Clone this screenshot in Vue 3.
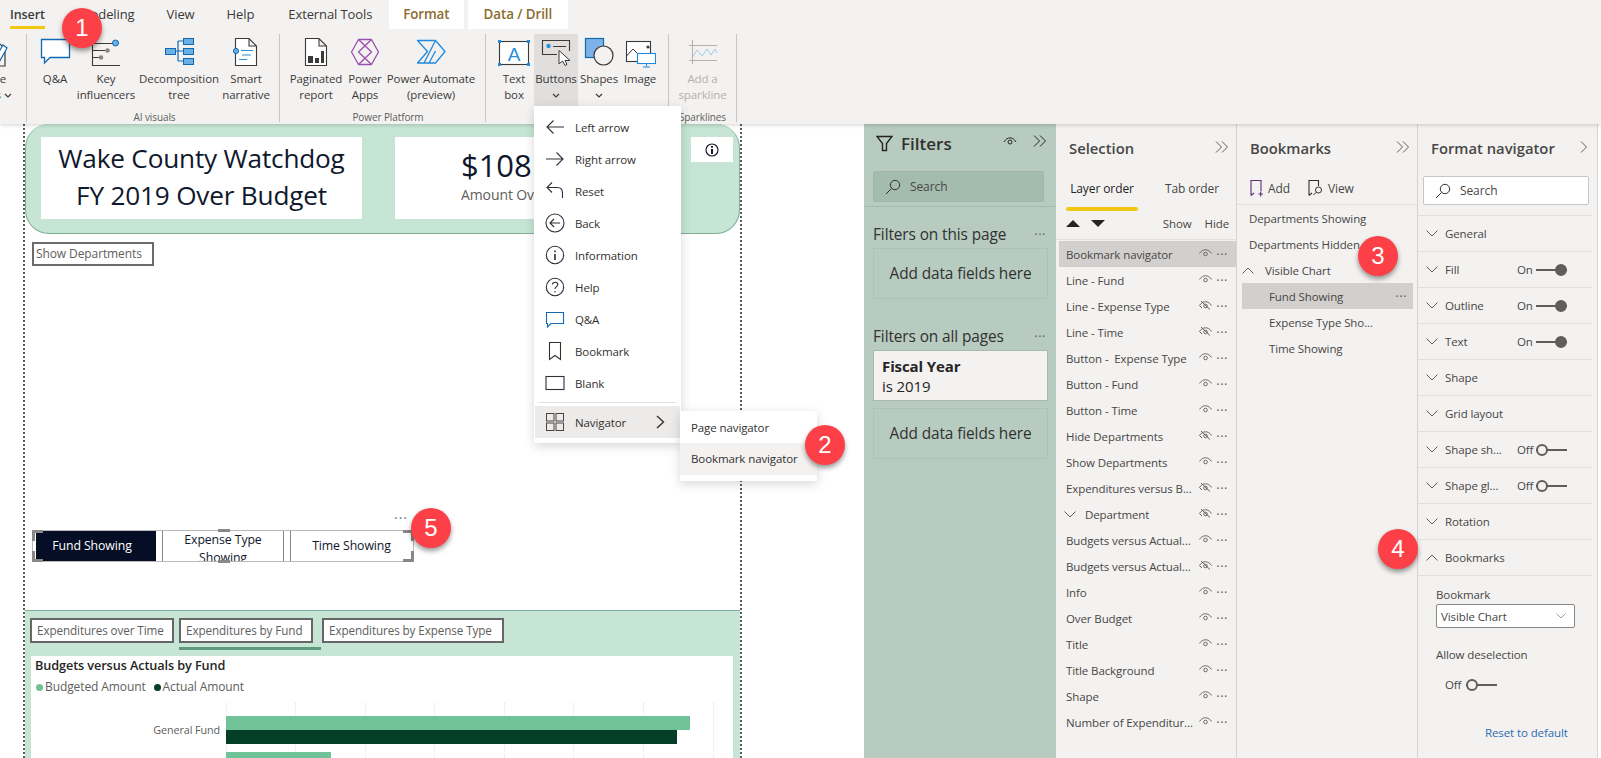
<script setup>
const BLUE = '#1168b3';
const DARK = '#3b3a39';

// ribbon icons, all drawn on a 32x32 box
const ribbonIcons = {
  pencil: `<path d="M-8 8H7L12 13V30H-8" fill="none" stroke="${DARK}" stroke-width="1.2"/><path d="M0 26L10 9l4 3L5 28Z" fill="#fff" stroke="${BLUE}" stroke-width="1.2"/>`,
  qa: `<path d="M2.5 3.5H30.5V21.5H11L5.5 27V21.5H2.5Z" fill="#fff" stroke="${BLUE}" stroke-width="1.3"/>`,
  key: `<g fill="none" stroke="${DARK}" stroke-width="1.1"><path d="M2.5 7V29.5H30M2.5 7.5H23M2.5 14.5H15M2.5 21.5H9"/></g><circle cx="25.5" cy="7" r="3" fill="#6ab0e4" stroke="${BLUE}"/><circle cx="17.5" cy="14.5" r="2.3" fill="#8a8886"/><circle cx="11" cy="21.5" r="2.3" fill="#8a8886"/>`,
  decomp: `<path d="M13 15H20M15 5V25M15 5H20M15 25H20" fill="none" stroke="${BLUE}" stroke-width="1.2"/><g fill="#6ab0e4" stroke="${BLUE}"><rect x="2.5" y="12.5" width="10" height="6"/><rect x="20.5" y="2.5" width="10" height="6"/><rect x="20.5" y="12.5" width="10" height="6"/><rect x="20.5" y="22.5" width="10" height="6"/></g>`,
  smart: `<path d="M5.5 2.5H19L26.5 10V29.5H5.5ZM19 2.5V10H26.5" fill="#fff" stroke="${DARK}" stroke-width="1.1"/><circle cx="6" cy="15" r="2.6" fill="#6ab0e4" stroke="${BLUE}"/><path d="M11 14.5H23M12 19H21M9 23.5H17" stroke="#2a8fd8" stroke-width="1.1"/>`,
  paginated: `<path d="M5.5 2.5H19L26.5 10V29.5H5.5ZM19 2.5V10H26.5" fill="#fff" stroke="${DARK}" stroke-width="1.1"/><g fill="${DARK}"><rect x="8" y="20" width="5" height="7"/><rect x="15" y="22" width="4" height="5"/><rect x="21" y="15" width="3" height="12"/></g>`,
  apps: `<g fill="none" stroke="#9b4fb0" stroke-width="1.3" stroke-linejoin="round"><path d="M9.5 3.5H22.5L29.5 16L22.5 28.5H9.5L2.5 16Z"/><path d="M9.5 3.5L22.5 16L9.5 28.5M22.5 3.5L9.5 16L22.5 28.5"/></g>`,
  automate: `<g fill="none" stroke="#1f8ae0" stroke-width="1.3" stroke-linejoin="round"><path d="M2.5 4.5H20.5L30 15.5L20.5 27H2.5L12.5 15.5Z"/><path d="M20.5 4.5L9 27M20.5 15L14 27"/></g>`,
  textbox: `<rect x="1.5" y="5.5" width="29" height="23" fill="#fff" stroke="${DARK}" stroke-width="1.1"/><text x="16" y="24.5" font-size="19" text-anchor="middle" fill="#2a8fd8" font-family="Liberation Sans">A</text><g fill="#1f8ae0"><rect y="4" width="3" height="3"/><rect x="29" y="4" width="3" height="3"/><rect y="27" width="3" height="3"/><rect x="29" y="27" width="3" height="3"/></g>`,
  button: `<path d="M17 18.5H2.5V4.5H29.5V15" fill="none" stroke="${DARK}" stroke-width="1.1"/><circle cx="8.5" cy="10" r="2.2" fill="#2a8fd8"/><path d="M13 10.5H26" stroke="${DARK}"/><path d="M19 14.5V28L22.5 25L25 29.5L27 28.5L25 24.5H30Z" fill="#fff" stroke="${DARK}"/>`,
  shapes: `<rect x="2.5" y="2.5" width="18" height="19" fill="#7cb3ea" stroke="${BLUE}" stroke-width="1.2"/><circle cx="20.5" cy="19.5" r="9.5" fill="#f3f2f1" stroke="${DARK}" stroke-width="1.2"/>`,
  image: `<rect x="2.5" y="5.5" width="24" height="20" fill="#fff" stroke="${DARK}" stroke-width="1.1"/><path d="M2.5 20L9 13L15 19" fill="none" stroke="${DARK}"/><circle cx="24" cy="11" r="1.6" fill="${DARK}"/><rect x="13.5" y="17.5" width="18" height="10" fill="#fff" stroke="#1f8ae0" stroke-width="1.1"/><path d="M22.5 27.5V30.5M19 31H26" stroke="#1f8ae0"/>`,
  sparkline: `<path d="M5.5 4V28M2 9.5H30M2 24.5H30" stroke="#b3b0ad" fill="none"/><path d="M5.5 21L10 14L15 20L20 13L24 19L28 13L30 17" fill="none" stroke="#9ccde8"/>`,
};

const ribbonGroups = [
  {
    width: 27, left: 0, caption: '',
    items: [{ width: 26, icon: 'pencil', lines: ['re', 's'], chevron: true, cut: true }],
  },
  {
    width: 253, left: 3, caption: 'AI visuals',
    items: [
      { width: 50, icon: 'qa', lines: ['Q&A'] },
      { width: 52, icon: 'key', lines: ['Key', 'influencers'] },
      { width: 94, icon: 'decomp', lines: ['Decomposition', 'tree'] },
      { width: 40, icon: 'smart', lines: ['Smart', 'narrative'] },
    ],
  },
  {
    width: 206, left: 11, caption: 'Power Platform',
    items: [
      { width: 50, icon: 'paginated', lines: ['Paginated', 'report'] },
      { width: 48, icon: 'apps', lines: ['Power', 'Apps'] },
      { width: 84, icon: 'automate', lines: ['Power Automate', '(preview)'] },
    ],
  },
  {
    width: 183, left: 8, caption: '',
    items: [
      { width: 40, icon: 'textbox', lines: ['Text', 'box'] },
      { width: 44, icon: 'button', lines: ['Buttons'], chevron: true, active: true },
      { width: 42, icon: 'shapes', lines: ['Shapes'], chevron: true },
      { width: 40, icon: 'image', lines: ['Image'] },
    ],
  },
  {
    width: 68, left: 0, caption: 'Sparklines',
    items: [{ width: 67, icon: 'sparkline', lines: ['Add a', 'sparkline'], disabled: true }],
  },
];

const ribbonTabs = [
  { label: 'Insert', cls: 'tab--active' },
  { label: 'Modeling', cls: '' },
  { label: 'View', cls: '' },
  { label: 'Help', cls: '' },
  { label: 'External Tools', cls: '' },
  { label: 'Format', cls: 'tab--context' },
  { label: 'Data / Drill', cls: 'tab--context' },
];

// insert menu icons, 20x20 box
const menuItems = [
  { label: 'Left arrow', icon: '<path d="M19 10H2M8.5 3.5L2 10L8.5 16.5"/>' },
  { label: 'Right arrow', icon: '<path d="M1 10H18M11.5 3.5L18 10L11.5 16.5"/>' },
  { label: 'Reset', icon: '<path d="M2 6.5H12.5C16 6.5 17.5 9 17.5 12V17M7 1.5L2 6.5L7 11.5"/>' },
  { label: 'Back', icon: '<circle cx="10" cy="10" r="9"/><path d="M15 10H5M9 6L5 10L9 14"/>' },
  { label: 'Information', icon: '<circle cx="10" cy="10" r="8.7"/><path d="M10 9V15M10 5.5V7.2" stroke-width="1.6"/>' },
  { label: 'Help', icon: '<circle cx="10" cy="10" r="8.7"/><path d="M7.5 7.5C7.5 4.5 12.8 4.5 12.8 7.5C12.8 9.7 10 9.5 10 12M10 14V15.5"/>' },
  { label: 'Q&A', icon: `<path d="M1.5 3.5H18.5V14.5H6L2.5 18V14.5H1.5Z" stroke="${BLUE}"/>` },
  { label: 'Bookmark', icon: '<path d="M4.5 1.5H15.5V18.5L10 14.5L4.5 18.5Z"/>' },
  { label: 'Blank', icon: '<rect x="1" y="3.5" width="18" height="13"/>' },
];

const layers = [
  { name: 'Bookmark navigator', selected: true },
  { name: 'Line - Fund' },
  { name: 'Line - Expense Type', hidden: true },
  { name: 'Line - Time', hidden: true },
  { name: 'Button -  Expense Type' },
  { name: 'Button - Fund' },
  { name: 'Button - Time' },
  { name: 'Hide Departments', hidden: true },
  { name: 'Show Departments' },
  { name: 'Expenditures versus B...', hidden: true },
  { name: 'Department', hidden: true, group: true },
  { name: 'Budgets versus Actual...' },
  { name: 'Budgets versus Actual...', hidden: true },
  { name: 'Info' },
  { name: 'Over Budget' },
  { name: 'Title' },
  { name: 'Title Background' },
  { name: 'Shape' },
  { name: 'Number of Expenditur...' },
];

const formatRows = [
  { label: 'General' },
  { label: 'Fill', toggle: 'On' },
  { label: 'Outline', toggle: 'On' },
  { label: 'Text', toggle: 'On' },
  { label: 'Shape' },
  { label: 'Grid layout' },
  { label: 'Shape sh...', toggle: 'Off' },
  { label: 'Shape gl...', toggle: 'Off' },
  { label: 'Rotation' },
  { label: 'Bookmarks', open: true },
];

const gridLines = [226, 295, 365, 434, 504, 573, 643, 713];
</script>

<template>
  <div class="app">
    <header class="ribbon">
      <nav class="tabs">
        <span v-for="tab in ribbonTabs" :key="tab.label" class="tab" :class="tab.cls">{{ tab.label }}</span>
      </nav>
      <div class="groups">
        <section
          v-for="(group, i) in ribbonGroups"
          :key="i"
          class="group"
          :style="{ width: `${group.width}px`, paddingLeft: `${group.left}px` }"
        >
          <div class="group__items">
            <div
              v-for="item in group.items"
              :key="item.icon"
              class="rb"
              :class="{ 'rb--active': item.active, 'rb--off': item.disabled, 'rb--cut': item.cut }"
              :style="{ width: `${item.width}px` }"
            >
              <svg class="rb__icon" width="32" height="32" viewBox="0 0 32 32" v-html="ribbonIcons[item.icon]"></svg>
              <span v-for="line in item.lines" :key="line" class="rb__line">{{ line }}<svg v-if="item.cut && line === 's'" class="rb__inline" width="8" height="6" viewBox="0 0 8 6"><path d="M1 1L4 4L7 1" fill="none" stroke="#3b3a39" stroke-width="1.2" /></svg></span>
              <svg v-if="item.chevron && !item.cut" class="rb__more" width="8" height="6" viewBox="0 0 8 6"><path d="M1 1L4 4L7 1" fill="none" stroke="#3b3a39" stroke-width="1.2" /></svg>
            </div>
          </div>
          <div class="group__caption">{{ group.caption }}</div>
        </section>
      </div>
    </header>

    <main class="workspace">
      <div class="canvas">
        <div class="page">
          <div class="title-band">
            <div class="title-card">Wake County Watchdog<br />FY 2019 Over Budget</div>
            <div class="kpi-card">
              <div class="kpi-card__value">$108M</div>
              <div class="kpi-card__label">Amount Over Budget</div>
            </div>
            <div class="info-card">
              <svg width="14" height="14" viewBox="0 0 14 14"><circle cx="7" cy="7" r="6" fill="none" stroke="#1a1a2a" stroke-width="1.2" /><path d="M7 6V11M7 3V4.7" stroke="#1a1a2a" stroke-width="2" /></svg>
            </div>
          </div>

          <div class="show-dept">Show Departments</div>

          <div class="navigator">
            <span class="navigator__more">···</span>
            <div class="nav-btn nav-btn--on">Fund Showing</div>
            <div class="nav-btn nav-btn--two">Expense Type Showing</div>
            <div class="nav-btn">Time Showing</div>
            <i class="corner corner--tl"></i>
            <i class="corner corner--tr"></i>
            <i class="corner corner--bl"></i>
            <i class="corner corner--br"></i>
            <i class="notch notch--top"></i>
            <i class="notch notch--bottom"></i>
          </div>

          <div class="chart-band">
            <div class="chart-tabs">
              <span class="chart-tab chart-tab--time">Expenditures over Time</span>
              <span class="chart-tab chart-tab--fund">Expenditures by Fund</span>
              <span class="chart-tab">Expenditures by Expense Type</span>
            </div>
            <div class="chart">
              <div class="chart__title">Budgets versus Actuals by Fund</div>
              <div class="legend">
                <i class="legend__dot legend__dot--budget"></i>Budgeted Amount
                <i class="legend__dot legend__dot--actual"></i>Actual Amount
              </div>
              <i v-for="x in gridLines" :key="x" class="grid-line" :style="{ left: `${x - 31}px` }"></i>
              <div class="bars">
                <span class="bars__label">General Fund</span>
                <div class="bars__track">
                  <div class="bar bar--budget" style="width: 464px"></div>
                  <div class="bar bar--actual" style="width: 451px"></div>
                  <div class="bar bar--budget bar--gap" style="width: 105px"></div>
                </div>
              </div>
            </div>
          </div>
        </div>
      </div>

      <aside class="filters">
        <div class="filters__head">
          <svg width="17" height="17" viewBox="0 0 17 17"><path d="M1 1.5H16L10.5 8.5V15.5H6.5V8.5Z" fill="none" stroke="#252423" stroke-width="1.4" /></svg>
          <h2 class="filters__title">Filters</h2>
          <svg class="filters__eye" width="14" height="10" viewBox="0 0 14 10"><path d="M1 6C4 0.5 10 0.5 13 6" fill="none" stroke="#252423" /><circle cx="7" cy="6" r="2" fill="none" stroke="#252423" /></svg>
          <svg class="filters__collapse" width="14" height="12" viewBox="0 0 14 12"><path d="M1 0.5L6.5 6L1 11.5M7 0.5L12.5 6L7 11.5" fill="none" stroke="#252423" /></svg>
        </div>
        <div class="filters__search">
          <svg width="16" height="16" viewBox="0 0 16 16"><circle cx="10" cy="6" r="4.7" fill="none" stroke="#323130" /><path d="M6.5 9.5L1 15" stroke="#323130" /></svg>
          Search
        </div>
        <div class="filters__body">
          <div class="filters__section"><span>Filters on this page</span><b class="dots">···</b></div>
          <div class="drop-well">Add data fields here</div>
          <div class="filters__section filters__section--all"><span>Filters on all pages</span><b class="dots">···</b></div>
          <div class="filter-card"><strong>Fiscal Year</strong><br />is 2019</div>
          <div class="drop-well drop-well--second">Add data fields here</div>
        </div>
      </aside>

      <aside class="panel selection">
        <div class="panel__head">
          <h2 class="panel__title">Selection</h2>
          <svg class="panel__collapse" width="14" height="12" viewBox="0 0 14 12"><path d="M1 0.5L6.5 6L1 11.5M7 0.5L12.5 6L7 11.5" fill="none" stroke="#605e5c" /></svg>
        </div>
        <div class="sel-tabs">
          <span class="sel-tab sel-tab--on">Layer order</span>
          <span class="sel-tab">Tab order</span>
        </div>
        <div class="sel-tools">
          <i class="tri tri--up"></i>
          <i class="tri tri--down"></i>
          <span class="sel-tools__show">Show</span>
          <span>Hide</span>
        </div>
        <div class="layers">
          <div v-for="(layer, i) in layers" :key="i" class="layer" :class="{ 'layer--selected': layer.selected }">
            <svg v-if="layer.group" class="layer__chev" width="12" height="7" viewBox="0 0 12 7"><path d="M0.5 0.5L6 6L11.5 0.5" fill="none" stroke="#605e5c" /></svg>
            <span class="layer__name" :class="{ 'layer__name--group': layer.group }">{{ layer.name }}</span>
            <svg class="layer__eye" width="13" height="10" viewBox="0 0 13 10">
              <path d="M0.5 5.5C3.5 0.5 9.5 0.5 12.5 5.5" fill="none" stroke="#605e5c" stroke-width="0.9" />
              <circle cx="6.5" cy="6" r="1.8" fill="none" stroke="#605e5c" stroke-width="0.9" />
              <path v-if="layer.hidden" d="M2 1L11 9.5M0.5 5.5L3 8" fill="none" stroke="#605e5c" stroke-width="1" />
            </svg>
            <b class="dots">···</b>
          </div>
        </div>
      </aside>

      <aside class="panel bookmarks">
        <div class="panel__head">
          <h2 class="panel__title">Bookmarks</h2>
          <svg class="panel__collapse" width="14" height="12" viewBox="0 0 14 12"><path d="M1 0.5L6.5 6L1 11.5M7 0.5L12.5 6L7 11.5" fill="none" stroke="#605e5c" /></svg>
        </div>
        <div class="bm-tools">
          <span class="bm-tool">
            <svg width="13" height="17" viewBox="0 0 13 17"><path d="M1 15.5V0.5H11V11M1 15.5L4 13M8.5 14H13M10.7 11.5V16.5" fill="none" stroke="#5c2d71" stroke-width="1.1" /></svg>
            Add
          </span>
          <span class="bm-tool bm-tool--view">
            <svg width="15" height="17" viewBox="0 0 15 17"><path d="M1 15.5V0.5H10.5V6M1 15.5L4 13" fill="none" stroke="#323130" stroke-width="1.1" /><circle cx="10.5" cy="10" r="3" fill="none" stroke="#323130" /><path d="M8.3 12.2L5.5 15" stroke="#323130" /></svg>
            View
          </span>
        </div>
        <div class="bm-list">
          <div class="bm">Departments Showing</div>
          <div class="bm">Departments Hidden</div>
          <div class="bm bm--group">
            <svg width="12" height="7" viewBox="0 0 12 7"><path d="M0.5 6.5L6 1L11.5 6.5" fill="none" stroke="#605e5c" /></svg>
            Visible Chart
          </div>
          <div class="bm bm--child bm--selected">Fund Showing<b class="dots">···</b></div>
          <div class="bm bm--child">Expense Type Sho...</div>
          <div class="bm bm--child">Time Showing</div>
        </div>
      </aside>

      <aside class="panel format">
        <div class="panel__head">
          <h2 class="panel__title">Format navigator</h2>
          <svg class="panel__collapse" width="8" height="12" viewBox="0 0 8 12"><path d="M1 0.5L6.5 6L1 11.5" fill="none" stroke="#605e5c" /></svg>
        </div>
        <div class="format__search">
          <svg width="16" height="16" viewBox="0 0 16 16"><circle cx="10" cy="6" r="4.7" fill="none" stroke="#323130" /><path d="M6.5 9.5L1 15" stroke="#323130" /></svg>
          Search
        </div>
        <div class="format__rows">
          <div v-for="row in formatRows" :key="row.label" class="f-row">
            <svg width="12" height="7" viewBox="0 0 12 7">
              <path :d="row.open ? 'M0.5 6.5L6 1L11.5 6.5' : 'M0.5 0.5L6 6L11.5 0.5'" fill="none" stroke="#605e5c" />
            </svg>
            <span class="f-row__label">{{ row.label }}</span>
            <template v-if="row.toggle">
              <span class="f-row__state">{{ row.toggle }}</span>
              <i class="toggle" :class="row.toggle === 'On' ? 'toggle--on' : 'toggle--off'"></i>
            </template>
          </div>
        </div>
        <div class="bookmark-opts">
          <div class="bookmark-opts__label">Bookmark</div>
          <div class="select">
            Visible Chart
            <svg width="10" height="6" viewBox="0 0 10 6"><path d="M0.5 0.5L5 5L9.5 0.5" fill="none" stroke="#a19f9d" /></svg>
          </div>
          <div class="bookmark-opts__allow">Allow deselection</div>
          <div class="bookmark-opts__off"><span>Off</span><i class="toggle toggle--off"></i></div>
          <div class="bookmark-opts__reset">Reset to default</div>
        </div>
      </aside>
    </main>

    <!-- dropdown from the Buttons ribbon item -->
    <div class="menu">
      <div v-for="item in menuItems" :key="item.label" class="menu__item">
        <svg class="menu__icon" width="20" height="20" viewBox="0 0 20 20" v-html="item.icon"></svg>
        {{ item.label }}
      </div>
      <div class="menu__sep"></div>
      <div class="menu__item menu__item--on">
        <svg class="menu__icon" width="20" height="20" viewBox="0 0 20 20"><g fill="none" stroke="#484644" stroke-width="1"><rect x="1.5" y="1.5" width="7.5" height="7.5" /><rect x="11" y="1.5" width="7.5" height="7.5" /><rect x="1.5" y="11" width="7.5" height="7.5" /><rect x="11" y="11" width="7.5" height="7.5" /></g></svg>
        Navigator
        <svg class="menu__arrow" width="9" height="14" viewBox="0 0 9 14"><path d="M1 1L7.5 7L1 13" fill="none" stroke="#323130" stroke-width="1.4" /></svg>
      </div>
    </div>
    <div class="submenu">
      <div class="submenu__item">Page navigator</div>
      <div class="submenu__item submenu__item--on">Bookmark navigator</div>
    </div>

    <span class="badge badge--1">1</span>
    <span class="badge badge--2">2</span>
    <span class="badge badge--3">3</span>
    <span class="badge badge--4">4</span>
    <span class="badge badge--5">5</span>
  </div>
</template>

<style>
html,
body {
  margin: 0;
  overflow: hidden;
  background: #fff;
}
</style>

<style scoped>
.app {
  position: relative;
  width: 1601px;
  height: 758px;
  overflow: hidden;
  font-family: 'Open Sans', 'Liberation Sans', sans-serif;
  font-size: 11.5px;
  color: #323130;
  letter-spacing: -0.1px;
}

/* ribbon */
.ribbon {
  position: relative;
  z-index: 2;
  height: 124px;
  background: #f3f2f1;
  box-shadow: 0 1px 4px rgba(0, 0, 0, 0.18);
}

.tabs {
  display: flex;
  height: 29px;
  font-size: 13px;
  color: #3b3a39;
}

.tab {
  position: relative;
  margin-left: 32px;
  line-height: 29px;
  white-space: nowrap;
}

.tab:first-child {
  width: 35px;
  margin-left: 10px;
  font-size: 12.5px;
}

.tab:nth-child(2) {
  margin-left: 34px;
}

.tab:nth-child(5) {
  margin-left: 34px;
}

.tab--active {
  font-weight: 600;
}

.tab--active::after {
  content: '';
  position: absolute;
  left: 0;
  right: 0;
  bottom: 0;
  height: 3px;
  background: #f2c811;
}

.tab--context {
  width: 100px;
  margin-left: 4px;
  background: #fff;
  color: #8a6d2f;
  font-size: 13.4px;
  font-weight: 600;
  text-align: center;
}

.tab--context:nth-child(6) {
  width: 75px;
  margin-left: 16.5px;
}

.groups {
  display: flex;
  padding-top: 5px;
  height: 90px;
}

.group {
  box-sizing: border-box;
  flex: none;
  height: 88px;
  border-right: 1px solid #c8c6c4;
}

.group__items {
  display: flex;
  height: 72px;
}

.group__caption {
  margin-top: 5px;
  line-height: 12px;
  font-size: 10px;
  text-align: center;
  color: #605e5c;
}

.rb {
  flex: none;
  display: flex;
  flex-direction: column;
  align-items: center;
  padding-top: 2px;
  box-sizing: border-box;
  line-height: 16px;
  white-space: nowrap;
  color: #3b3a39;
}

.rb--active {
  background: #e1dfdd;
}

.rb--off {
  color: #b3b0ad;
}

.rb--cut {
  align-items: flex-end;
  overflow: hidden;
  padding-right: 20px;
}

.rb--cut .rb__icon {
  margin-right: -19px;
}

.rb--cut .rb__line:last-child {
  margin-right: -6px;
}

.rb__icon {
  flex: none;
  margin-bottom: 3px;
}

.rb__inline {
  margin-left: 3px;
}

.rb__more {
  margin-top: 6px;
}

/* report canvas */
.workspace {
  display: flex;
  height: 634px;
}

.canvas {
  flex: none;
  width: 864px;
  background: #fff;
}

.page {
  box-sizing: border-box;
  display: flex;
  flex-direction: column;
  width: 719px;
  height: 634px;
  margin-left: 23px;
  border-left: 2px dotted #5c5c5c;
  border-right: 2px dotted #5c5c5c;
}

.title-band {
  box-sizing: border-box;
  flex: none;
  display: flex;
  align-items: flex-start;
  gap: 33px;
  height: 110px;
  padding: 13px 8px 0 15px;
  background: #c6e5d4;
  border: 1px solid #7fae96;
  border-top: none;
  border-radius: 24px;
}

.title-card {
  flex: none;
  width: 321px;
  height: 82px;
  background: #fff;
  color: #10182c;
  font-size: 26.2px;
  line-height: 37px;
  text-align: center;
  padding-top: 3px;
  box-sizing: border-box;
  letter-spacing: -0.2px;
}

.kpi-card {
  flex: none;
  width: 263px;
  height: 82px;
  background: #fff;
  padding: 8px 0 0 66px;
  box-sizing: border-box;
  color: #10182c;
  white-space: nowrap;
  overflow: hidden;
}

.kpi-card__value {
  font-size: 31px;
  line-height: 40px;
}

.kpi-card__label {
  font-size: 14px;
  line-height: 20px;
  color: #605e5c;
}

.info-card {
  flex: none;
  display: flex;
  align-items: center;
  justify-content: center;
  width: 42px;
  height: 25px;
  background: #fff;
}

.show-dept {
  flex: none;
  box-sizing: border-box;
  width: 122px;
  height: 24px;
  margin: 8px 0 0 7px;
  padding-left: 2px;
  border: 2px solid #6b6b6b;
  font-size: 12px;
  line-height: 20px;
  white-space: nowrap;
  color: #605e5c;
}

/* bookmark navigator in edit mode */
.navigator {
  position: relative;
  flex: none;
  display: flex;
  box-sizing: border-box;
  width: 382px;
  height: 32px;
  margin: 264px 0 0 7px;
  border: 1px solid #b9b9b9;
  gap: 6px;
  padding: 0 0 0 3px;
}

.nav-btn {
  flex: none;
  box-sizing: border-box;
  width: 122px;
  height: 30px;
  overflow: hidden;
  border-left: 1px solid #8a8886;
  text-align: center;
  line-height: 18px;
  padding: 6px 8px 0;
  font-size: 12.3px;
  white-space: nowrap;
  color: #10182c;
}

.nav-btn--on {
  width: 120px;
  padding: 6px 12px 0 4px;
  border-left: none;
  background: #050e24;
  color: #fff;
}

.nav-btn--two {
  padding: 0 20px;
  border-right: 1px solid #8a8886;
  white-space: normal;
}

.navigator__more {
  position: absolute;
  right: 5px;
  top: -23px;
  font-size: 14px;
  letter-spacing: 1px;
  color: #797775;
}

.corner {
  position: absolute;
  width: 8px;
  height: 8px;
  border: 0 solid #8a8886;
}

.corner--tl {
  left: -1px;
  top: -1px;
  border-width: 3px 0 0 3px;
}

.corner--tr {
  right: -1px;
  top: -1px;
  border-width: 3px 3px 0 0;
}

.corner--bl {
  left: -1px;
  bottom: -1px;
  border-width: 0 0 3px 3px;
}

.corner--br {
  right: -1px;
  bottom: -1px;
  border-width: 0 3px 3px 0;
}

.notch {
  position: absolute;
  left: 185px;
  width: 12px;
  height: 3px;
  background: #8a8886;
}

.notch--top {
  top: -2px;
}

.notch--bottom {
  bottom: -2px;
}

/* chart section */
.chart-band {
  flex: none;
  box-sizing: border-box;
  height: 148px;
  margin-top: 48px;
  background: #c6e5d4;
  border-top: 1px solid #7fae96;
}

.chart-tabs {
  display: flex;
  height: 45px;
  padding: 7px 0 0 5px;
  box-sizing: border-box;
}

.chart-tab {
  box-sizing: border-box;
  height: 25px;
  margin-right: 5px;
  padding: 0 5px;
  background: #fff;
  border: 2px solid #666;
  font-size: 11.7px;
  line-height: 21px;
  color: #605e5c;
  white-space: nowrap;
}

.chart-tab--time {
  width: 144px;
}

.chart-tab--fund {
  position: relative;
  width: 134px;
  margin-right: 9px;
}

.chart-tab--fund::after {
  content: '';
  position: absolute;
  left: -2px;
  bottom: -9px;
  width: 142px;
  height: 3px;
  background: #5e9a7c;
}

.chart-tab:nth-child(3) {
  width: 182px;
}

.chart {
  position: relative;
  box-sizing: border-box;
  width: 702px;
  height: 102px;
  margin-left: 6px;
  background: #fff;
  padding: 1px 0 0 4px;
  overflow: hidden;
}

.chart__title {
  font-size: 12.7px;
  line-height: 16px;
  font-weight: 600;
  color: #252423;
}

.legend {
  display: flex;
  align-items: center;
  margin-top: 6px;
  font-size: 12px;
  line-height: 16px;
  color: #605e5c;
  white-space: nowrap;
}

.legend__dot {
  width: 7px;
  height: 7px;
  margin-right: 2px;
  margin-left: 1px;
  border-radius: 50%;
}

.legend__dot--budget {
  background: #70c297;
}

.legend__dot--actual {
  margin-left: 8px;
  background: #053e26;
}

.grid-line {
  position: absolute;
  top: 47px;
  bottom: 0;
  width: 0;
  border-left: 1px dotted #e3e3e3;
}

.bars {
  position: relative;
  display: flex;
  margin-top: 21px;
  margin-left: -4px;
}

.bars__label {
  box-sizing: border-box;
  width: 195px;
  padding: 6px 6px 0 0;
  text-align: right;
  font-size: 10.8px;
  line-height: 16px;
  color: #605e5c;
}

.bars__track {
  flex: 1;
}

.bar {
  height: 14px;
}

.bar--budget {
  background: #70c297;
}

.bar--actual {
  background: #053e26;
}

.bar--gap {
  margin-top: 8px;
}

/* filters pane */
.filters {
  flex: none;
  box-sizing: border-box;
  width: 192px;
  background: #b7cbc0;
}

.filters__head {
  display: flex;
  align-items: center;
  height: 38px;
  padding: 0 0 0 12px;
  box-sizing: border-box;
}

.filters__title {
  margin: 0 0 0 8px;
  font-size: 17px;
  font-weight: 600;
  color: #323130;
  letter-spacing: 0;
}

.filters__eye {
  margin: -4px 0 0 51px;
}

.filters__collapse {
  margin: -4px 0 0 16px;
}

.filters__search {
  display: flex;
  align-items: center;
  gap: 9px;
  box-sizing: border-box;
  width: 171px;
  height: 31px;
  margin: 9px 0 0 9px;
  padding-left: 11px;
  background: #a4bcae;
  border: 1px solid #9fb6a9;
  border-radius: 2px;
  font-size: 12px;
  color: #484644;
}

.filters__body {
  margin-top: 4px;
  border-top: 1px solid #a7b8ae;
  padding: 0 8px 0 9px;
}

.filters__section {
  display: flex;
  align-items: center;
  justify-content: space-between;
  height: 18px;
  margin-top: 18px;
  font-size: 15.4px;
  white-space: nowrap;
  color: #323130;
  padding-right: 2px;
}

.filters__section--all {
  margin-top: 28px;
}

.drop-well {
  box-sizing: border-box;
  height: 51px;
  margin-top: 5px;
  border: 1px solid #adc2b6;
  font-size: 15.4px;
  line-height: 49px;
  text-align: center;
  white-space: nowrap;
  color: #323130;
}

.drop-well--second {
  margin-top: 7px;
}

.filter-card {
  box-sizing: border-box;
  height: 51px;
  margin-top: 5px;
  padding: 5px 0 0 8px;
  background: #f3f2f1;
  border: 1px solid #a7b8ae;
  font-size: 15px;
  line-height: 20px;
  color: #252423;
}

.dots {
  font-weight: 400;
  font-size: 13px;
  letter-spacing: 0.5px;
  color: #605e5c;
}

/* shared side panel */
.panel {
  flex: none;
  box-sizing: border-box;
  width: 181px;
  background: #f3f2f1;
  border-right: 1px solid #d6d4d2;
}

.panel__head {
  display: flex;
  align-items: center;
  justify-content: space-between;
  height: 48px;
  box-sizing: border-box;
  padding: 0 7px 0 13px;
}

.panel__title {
  margin: 0;
  font-size: 14.8px;
  font-weight: 600;
  color: #484644;
  letter-spacing: 0;
}

.panel__collapse {
  margin-top: -3px;
}

/* selection pane */
.sel-tabs {
  display: flex;
  height: 26px;
  padding-left: 10px;
  font-size: 12px;
  line-height: 34px;
}

.sel-tab {
  flex: none;
  width: 72px;
  margin-right: 18px;
  text-align: center;
  color: #484644;
  white-space: nowrap;
}

.sel-tab:last-child {
  margin-right: 0;
}

.sel-tab--on {
  position: relative;
  height: 39px;
  color: #252423;
}

.sel-tab--on::after {
  content: '';
  position: absolute;
  left: 0;
  right: 0;
  bottom: 0;
  height: 4px;
  border-radius: 2px;
  background: #f2c811;
}

.sel-tools {
  display: flex;
  align-items: center;
  height: 27px;
  margin-top: 15px;
  padding: 0 0 5px 10px;
  box-sizing: border-box;
  font-size: 11.5px;
  border-bottom: 1px solid #e1dfdd;
  margin-right: -1px;
  color: #484644;
}

.sel-tools span {
  margin-right: 13px;
  white-space: nowrap;
}

.sel-tools__show {
  margin-left: auto;
}

.sel-tools span:last-child {
  margin-right: 8px;
}

.tri {
  width: 0;
  height: 0;
  margin-right: 11px;
  border-left: 7px solid transparent;
  border-right: 7px solid transparent;
}

.tri--up {
  border-bottom: 7px solid #252423;
}

.tri--down {
  border-top: 7px solid #252423;
}

.layers {
  padding: 1px 0 0 3px;
}

.layer {
  display: flex;
  align-items: center;
  height: 26px;
  padding: 0 8px 0 7px;
  font-size: 11.5px;
  color: #484644;
}

.layer--selected {
  background: #d2d0ce;
}

.layer__name {
  flex: 1;
  min-width: 0;
  white-space: pre;
}

.layer__name--group {
  padding-left: 9px;
}

.layer__chev {
  flex: none;
  margin-left: -2px;
}

.layer__eye {
  flex: none;
  margin: -3px 4px 0 0;
}

/* bookmarks pane */
.bm-tools {
  display: flex;
  align-items: center;
  height: 32px;
  padding-left: 13px;
  border-bottom: 1px solid #e1dfdd;
  font-size: 12px;
}

.bm-tool {
  display: flex;
  align-items: center;
  gap: 5px;
  color: #484644;
}

.bm-tool--view {
  margin-left: 18px;
}

.bm-list {
  padding: 0 0 0 5px;
}

.bm {
  display: flex;
  align-items: center;
  height: 26px;
  padding: 0 0 0 7px;
  font-size: 11.5px;
  color: #484644;
  white-space: nowrap;
}

.bm--group svg {
  margin-right: 11px;
  margin-left: -7px;
}

.bm--child {
  padding-left: 27px;
}

.bm--selected {
  justify-content: space-between;
  padding-right: 6px;
  margin-right: 4px;
  background: #d2d0ce;
}

/* format pane */
.format {
  width: 180px;
  border-right: 1px solid #d6d4d2;
}

.format .panel__head {
  padding-left: 13px;
  padding-right: 9px;
}

.format__search {
  display: flex;
  align-items: center;
  gap: 9px;
  box-sizing: border-box;
  width: 166px;
  height: 29px;
  margin: 4px 0 0 5px;
  padding-left: 11px;
  background: #fff;
  border: 1px solid #c8c6c4;
  border-radius: 2px;
  font-size: 12px;
  color: #484644;
}

.format__rows {
  margin: 10px 5px 0 0;
  border-top: 1px solid #e1dfdd;
}

.f-row {
  display: flex;
  align-items: center;
  box-sizing: border-box;
  height: 36px;
  padding-left: 8px;
  border-bottom: 1px solid #e1dfdd;
  font-size: 11.5px;
  color: #484644;
}

.f-row__label {
  width: 72px;
  margin-left: 7px;
  white-space: nowrap;
}

.f-row__state {
  width: 19px;
}

.toggle {
  position: relative;
  flex: none;
  width: 31px;
  height: 12px;
}

.toggle::before {
  content: '';
  position: absolute;
  left: 0;
  right: 0;
  top: 5px;
  height: 2px;
  background: #605e5c;
}

.toggle::after {
  content: '';
  position: absolute;
  top: 0;
  box-sizing: border-box;
  width: 12px;
  height: 12px;
  border-radius: 50%;
  border: 2px solid #605e5c;
  background: #f3f2f1;
}

.toggle--on::after {
  right: 0;
  background: #605e5c;
}

.toggle--off::after {
  left: 0;
}

.bookmark-opts {
  padding: 11px 0 0 18px;
  font-size: 11.5px;
  color: #484644;
}

.bookmark-opts__label {
  line-height: 16px;
}

.select {
  display: flex;
  align-items: center;
  justify-content: space-between;
  box-sizing: border-box;
  width: 139px;
  height: 24px;
  margin-top: 1px;
  padding: 0 8px 0 4px;
  background: #fff;
  border: 1px solid #8a8886;
  border-radius: 2px;
}

.bookmark-opts__allow {
  margin-top: 19px;
  line-height: 16px;
}

.bookmark-opts__off {
  display: flex;
  align-items: center;
  margin: 14px 0 0 9px;
}

.bookmark-opts__off span {
  width: 21px;
}

.bookmark-opts__reset {
  margin: 33px 0 0 49px;
  color: #2e6bb0;
  white-space: nowrap;
}

/* insert menu */
.menu {
  position: absolute;
  z-index: 3;
  left: 534px;
  top: 106px;
  box-sizing: border-box;
  width: 147px;
  height: 337px;
  padding: 5px 1px 0;
  background: #fff;
  box-shadow: 0 3px 10px rgba(0, 0, 0, 0.16);
}

.menu__item {
  display: flex;
  align-items: center;
  height: 32px;
  padding-left: 10px;
  font-size: 11.5px;
  color: #323130;
}

.menu__icon {
  flex: none;
  margin-right: 10px;
  fill: none;
  stroke: #323130;
  stroke-width: 1.1;
}

.menu__sep {
  height: 1px;
  margin: 3px 4px 3px;
  background: #e1dfdd;
}

.menu__item--on {
  background: #edebe9;
}

.menu__arrow {
  margin-left: auto;
  margin-right: 15px;
}

.submenu {
  position: absolute;
  z-index: 3;
  left: 680px;
  top: 411px;
  width: 137px;
  box-sizing: border-box;
  height: 70px;
  padding-top: 1px;
  background: #fff;
  box-shadow: 0 3px 10px rgba(0, 0, 0, 0.16);
}

.submenu__item {
  height: 31px;
  padding-left: 11px;
  font-size: 11.5px;
  line-height: 31px;
  white-space: nowrap;
  color: #323130;
}

.submenu__item--on {
  height: 32px;
  background: #f3f2f1;
}

/* callout numbers */
.badge {
  position: absolute;
  z-index: 4;
  display: flex;
  align-items: center;
  justify-content: center;
  width: 40px;
  height: 40px;
  border-radius: 50%;
  background: #fd4048;
  box-shadow: 0 3px 5px rgba(0, 0, 0, 0.4);
  font-family: 'Liberation Sans', sans-serif;
  font-size: 24px;
  letter-spacing: 0;
  color: #fff;
}

.badge--1 {
  left: 62px;
  top: 8px;
}

.badge--2 {
  left: 805px;
  top: 425px;
}

.badge--3 {
  left: 1358px;
  top: 236px;
}

.badge--4 {
  left: 1378px;
  top: 529px;
}

.badge--5 {
  left: 411px;
  top: 508px;
}
</style>
